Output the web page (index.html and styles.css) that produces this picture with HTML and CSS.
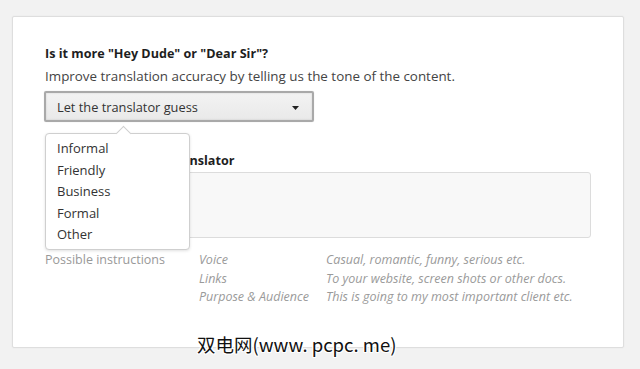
FILE: index.html
```html
<!DOCTYPE html>
<html>
<head>
<meta charset="utf-8">
<link rel="stylesheet" href="styles.css">
</head>
<body>
<div class="card">
  <h2 class="q-title">Is it more "Hey Dude" or "Dear Sir"?</h2>
  <p class="q-sub">Improve translation accuracy by telling us the tone of the content.</p>
  <div class="select-wrap">
    <div class="select">
      <span>Let the translator guess</span>
      <svg class="caret" width="7" height="4" viewBox="0 0 7 4"><path d="M0 0H7L3.5 4Z" fill="#222"/></svg>
    </div>
    <div class="popup">
      <div class="popup-arrow"></div>
      <ul class="options">
        <li>Informal</li>
        <li>Friendly</li>
        <li>Business</li>
        <li>Formal</li>
        <li>Other</li>
      </ul>
    </div>
  </div>
  <h3 class="label">Instructions for the translator</h3>
  <div class="textarea"></div>
  <div class="hints">
    <div class="hints-title">Possible instructions</div>
    <div class="hint-key">Voice</div>
    <div class="hint-val">Casual, romantic, funny, serious etc.</div>
    <div class="hint-key r2">Links</div>
    <div class="hint-val r2">To your website, screen shots or other docs.</div>
    <div class="hint-key r3">Purpose &amp; Audience</div>
    <div class="hint-val r3">This is going to my most important client etc.</div>
  </div>
</div>
<div class="watermark">双电网(www. pcpc. me)</div>
</body>
</html>
```
FILE: styles.css
```css
html, body {
  margin: 0;
  padding: 0;
}
body {
  background: #f2f2f2;
  font-family: "Open Sans", "Noto Sans", sans-serif;
  width: 640px;
  height: 369px;
  overflow: hidden;
  position: relative;
}
.card {
  box-sizing: border-box;
  margin: 16px 0 0 12px;
  width: 612px;
  height: 332px;
  background: #fff;
  border: 1px solid #dedede;
  border-radius: 2px;
  box-shadow: 0 0 2px rgba(0,0,0,0.06);
  padding: 28px 0 0 32px;
}
.q-title {
  margin: 0;
  font-size: 12.6px;
  line-height: 18px;
  font-weight: 700;
  color: #1e1e1e;
}
.q-sub {
  margin: 4px 0 0;
  font-size: 13.4px;
  line-height: 18px;
  color: #444;
}
.select-wrap {
  position: relative;
  margin: 6px 0 0 -1px;
  width: 270px;
}
.select {
  box-sizing: border-box;
  height: 31px;
  width: 270px;
  border: 2px solid #a9a9a9;
  border-radius: 2px;
  background: linear-gradient(#f3f3f3, #e9e9e9);
  box-shadow: inset 0 0 2px rgba(0,0,0,0.15), 0 0 1px rgba(0,0,0,0.2);
  display: flex;
  align-items: center;
  justify-content: space-between;
  padding: 0 13px 0 11px;
  font-size: 12.8px;
  color: #333;
}
.caret {
  display: block;
  margin-top: 2px;
}
.popup {
  position: absolute;
  left: 1px;
  top: 42px;
  width: 145px;
  box-sizing: border-box;
  background: #fff;
  border: 1px solid #cfcfcf;
  border-radius: 4px;
  box-shadow: 0 1px 3px rgba(0,0,0,0.12);
  z-index: 5;
}
.popup-arrow {
  position: absolute;
  left: 72px;
  top: -6px;
  width: 10px;
  height: 10px;
  background: #fff;
  border-left: 1px solid #cfcfcf;
  border-top: 1px solid #cfcfcf;
  transform: rotate(45deg);
  transform-origin: center;
}
.options {
  list-style: none;
  margin: 0;
  padding: 4px 0 3px 11px;
  position: relative;
  font-size: 13px;
  line-height: 21.5px;
  color: #333;
}
.label {
  margin: 30px 0 0;
  font-size: 12.6px;
  line-height: 18px;
  font-weight: 700;
  color: #1e1e1e;
}
.textarea {
  margin-top: 2px;
  width: 546px;
  height: 66px;
  box-sizing: border-box;
  background: #f8f8f8;
  border: 1px solid #dcdcdc;
  border-radius: 3px;
}
.hints {
  margin-top: 13px;
  display: grid;
  grid-template-columns: 154px 127px auto;
  font-size: 12.5px;
  line-height: 18.5px;
  color: #9a9a9a;
}
.hints-title {
  grid-row: 1;
  grid-column: 1;
  font-size: 12.5px;
  color: #999;
}
.hint-key, .hint-val {
  font-style: italic;
  grid-row: 1;
}
.hint-key { grid-column: 2; }
.hint-val { grid-column: 3; }
.r2 { grid-row: 2; }
.r3 { grid-row: 3; }
.watermark {
  position: absolute;
  left: 197px;
  top: 331px;
  font-family: "Noto Sans CJK SC", "DejaVu Sans", sans-serif;
  font-size: 18.5px;
  line-height: 26px;
  color: #111;
  text-shadow: 1px 0 0 #fff, -1px 0 0 #fff, 0 1px 0 #fff, 0 -1px 0 #fff, 1px 1px 0 #fff, -1px -1px 0 #fff, 1px -1px 0 #fff, -1px 1px 0 #fff;
  white-space: nowrap;
}
```
